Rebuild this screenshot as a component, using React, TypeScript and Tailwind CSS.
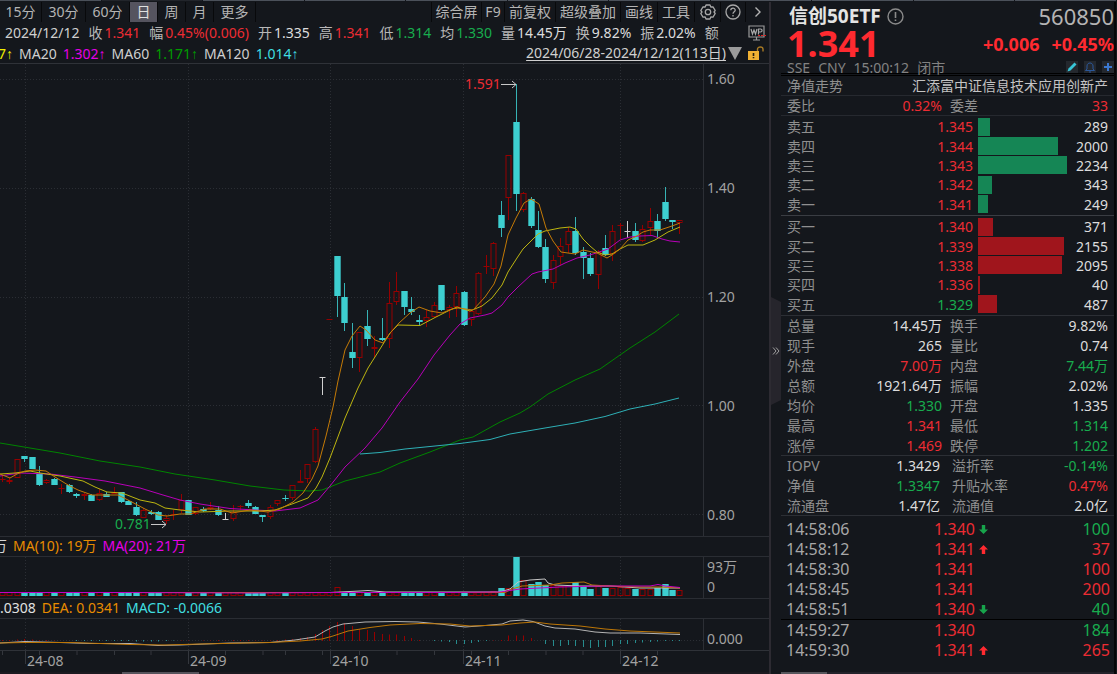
import React from "react";

type Kind = "up" | "down" | "flat";
/** kind, body top, body bottom, high, low (pane coordinates) */
type Candle = [Kind, number, number, number, number];

const PITCH = 7.447;
const FIRST = 2.3;
const cx = (i: number) => FIRST + PITCH * i;

const CYAN = "#3dcfd0";
const RED = "#960000";
const WHITE = "#d0d0d0";

const candles: Candle[] = [
  ["up", 479, 480, 475, 482], ["up", 480, 482, 478, 484], ["up", 459, 478, 459, 478], ["down", 456, 459, 456, 462],
  ["down", 457, 469, 457, 469], ["down", 474, 485, 466, 486], ["up", 480, 483, 479, 484], ["down", 479, 485, 478, 485],
  ["up", 488, 489, 484, 494], ["down", 485, 492, 484, 493], ["down", 494, 496, 493, 498], ["up", 494, 496, 493, 500],
  ["down", 495, 501, 494, 501], ["up", 493, 500, 489, 501], ["down", 494, 497, 492, 497], ["up", 492, 494, 487, 494],
  ["down", 492, 502, 492, 503], ["down", 501, 505, 500, 505], ["down", 507, 515, 502, 516], ["up", 510, 518, 508, 518],
  ["down", 512, 514, 510, 515], ["down", 512, 520, 511, 520], ["up", 518, 521, 515, 524], ["up", 514, 515, 510, 520],
  ["up", 500, 510, 494, 513], ["down", 500, 515, 500, 515], ["up", 507, 514, 507, 515], ["down", 509, 511, 507, 512],
  ["up", 507, 509, 502, 510], ["down", 510, 515, 506, 516], ["flat", 519, 520, 513, 520], ["up", 512, 519, 505, 521],
  ["up", 506, 507, 505, 510], ["down", 503, 506, 500, 508], ["down", 507, 514, 506, 514], ["down", 515, 517, 515, 522],
  ["up", 507, 517, 505, 519], ["up", 500, 504, 500, 506], ["down", 498, 499, 495, 501], ["up", 485, 498, 485, 500],
  ["up", 481, 483, 470, 483], ["up", 464, 479, 464, 483], ["up", 429, 462, 427, 463], ["flat", 377, 378, 377, 395],
  ["up", 319, 320, 319, 320], ["down", 256, 296, 256, 317], ["down", 297, 323, 283, 331], ["down", 352, 358, 323, 368],
  ["up", 332, 358, 332, 372], ["down", 326, 339, 310, 346], ["up", 347, 349, 336, 358], ["down", 338, 340, 318, 341],
  ["up", 303, 339, 282, 348], ["up", 291, 302, 272, 305], ["down", 291, 307, 291, 315], ["down", 309, 312, 297, 315],
  ["down", 320, 322, 315, 326], ["up", 317, 321, 310, 327], ["up", 305, 317, 302, 318], ["down", 285, 310, 285, 311],
  ["up", 307, 310, 305, 318], ["up", 293, 307, 286, 317], ["down", 292, 325, 291, 326], ["up", 311, 320, 310, 326],
  ["up", 273, 314, 272, 315], ["up", 266, 267, 255, 274], ["up", 243, 269, 242, 276], ["down", 215, 228, 201, 237],
  ["up", 155, 198, 155, 220], ["down", 122, 194, 84, 211], ["up", 193, 210, 192, 212], ["down", 199, 226, 197, 228],
  ["down", 230, 247, 211, 248], ["down", 247, 279, 239, 283], ["up", 260, 283, 255, 289], ["up", 246, 257, 238, 265],
  ["up", 231, 245, 227, 253], ["down", 231, 253, 217, 255], ["down", 252, 258, 247, 279], ["down", 258, 274, 253, 276],
  ["up", 252, 275, 250, 289], ["down", 248, 255, 235, 256], ["up", 231, 254, 225, 261], ["up", 225, 226, 223, 239],
  ["flat", 231, 232, 221, 238], ["down", 231, 240, 223, 242], ["up", 229, 241, 225, 242], ["up", 221, 228, 208, 235],
  ["down", 221, 231, 214, 238], ["down", 202, 219, 187, 221], ["down", 220, 222, 220, 229], ["up", 220, 223, 220, 234],
];

const volumes = [
  ...candles.slice(0, 65).map((_, i) => (i === 45 ? 9 : 4)),
  4, 5, 8, 8, 39, 16, 12, 14, 11, 11, 10, 11, 14, 10, 7, 10, 8, 8, 9, 8, 7, 7, 7, 8, 12, 6, 6,
];

const macd = [
  1, 1, 1.5, 2, 1.5, 1, 1, 0.5, 0, 0, -1, -1, -1, -1, -1, -1, -1, -1, -1.5, -1.5, -1.5, -1.5, -1, -0.5, 0.5, 0.5, 0, 0.5,
  0.5, 1, 0.5, 1, 1, 1, 0.5, 0.5, 0.5, 1, 1.5, 2, 3, 4, 7, 11, 15, 19, 18, 15, 12, 11, 9, 7, 6.5, 6.5, 5, 3, 1, 0, -1,
  -1.5, -2, -4, -4, -3, -2, -1, 0.5, 1, 5.5, 5.5, 5.5, 3, 0, -4, -6, -6, -5, -6, -7, -8, -7, -7, -6, -4, -4, -3, -2.5,
  -2, -1.5, -1, -1, -1,
];

const months = [25, 188.5, 330, 463.5, 620.5];
const minorTicks = [2.5, 39.5, 77, 114.5, 151, 225.5, 263, 285.5, 322.5, 359.5, 397, 434.5, 471.5, 508.5, 546, 583, 657.5];

function Pane({ y, height, className, grid, children }: {
  y: number; height: number; className: string; grid: number[]; children: React.ReactNode;
}) {
  return (
    <svg className={`min-w-0 flex-1 ${className}`} viewBox={`0 ${y} 704 ${height}`} preserveAspectRatio="none" fill="none" aria-hidden="true">
      {months.map((x) => (
        <path key={x} d={`M${Math.floor(x) + 0.5} ${y}V${y + height}`} stroke="#2b2e34" strokeDasharray="1 2" />
      ))}
      {grid.map((g) => (
        <path key={g} d={`M0 ${g}H704`} stroke="#2b2e34" strokeDasharray="1 2" />
      ))}
      <path d={`M703.5 ${y}V${y + height}`} stroke="#2c2f35" />
      {children}
    </svg>
  );
}

function CandleShape({ c, i }: { c: Candle; i: number }) {
  const [kind, top, bottom, high, low] = c;
  const x = cx(i);
  const wick = Math.floor(x);
  if (kind === "down") {
    return (
      <g fill={CYAN}>
        <rect x={wick} y={high} width={1} height={low - high} opacity={0.85} />
        <rect x={wick - 2.7} y={top} width={6.4} height={Math.max(1, bottom - top)} />
      </g>
    );
  }
  const color = kind === "up" ? RED : WHITE;
  return (
    <g>
      {top > high && <rect x={wick} y={high} width={1} height={top - high} fill={color} />}
      {low > bottom && <rect x={wick} y={bottom} width={1} height={low - bottom} fill={color} />}
      {bottom - top <= 1 ? (
        <rect x={wick - 2.5} y={top} width={6} height={1} fill={color} />
      ) : (
        <rect x={wick - 2} y={top + 0.5} width={5} height={bottom - top - 1} stroke={color} />
      )}
    </g>
  );
}

function PriceChart() {
  return (
    <Pane y={64} height={472} className="h-[472px]" grid={[79.5, 188.5, 297.5, 405.5, 514.5]}>
      {candles.map((c, i) => <CandleShape key={i} c={c} i={i} />)}
      <g strokeWidth="1" strokeLinejoin="round">
        <path stroke="#008400" d="M0 443L24 447L60 453L100 461L140 467L175 474L215 480L250 486L284 490L310 491L322 490L345 481L380 472L400 463L430 452L460 440L473 437L500 422L520 413L530 407L548 394L575 380L600 369L630 348L655 332L679 314" />
        <path stroke="#2eb0b6" d="M360 454L380 452.5L405 449L435 446L460 443.5L490 439.5L510 434L545 428L575 423L605 416.5L630 409L655 404L679 398" />
        <path stroke="#b800b8" d="M0 476L20 473L50 474L75 477L105 481L140 488L163 495L180 500L200 504L230 508.5L255 510L275 511L300 508L318 500L330 486L345 467L365 448L382 428L400 402L418 379L434 355L450 335L460 324L470 318L485 315L492 313L502 305L508 297L518 287L532 274L538 272L553 269L565 263L577 258L590 255L608 249L620 240L630 237L640 236L652 235.5L662 239L670 241L680 242" />
        <path stroke="#bdb510" d="M0 474L15 473L30 471L40 473L60 476L83 481L95 487L107 492L122 493L140 500L155 503L165 508L180 510L200 512L230 511L260 511L275 510L292 504L308 498L316 488L322 477L330 458L345 418L358 388L368 368L380 349L390 333L398 325L420 325.5L436 317L450 310L457 307L470 311L482 306L492 298L502 285L508 272L517 258L523 249L531 241L538 234L545 231L560 228L570 227L576 229L583 239L590 246L597 252L605 255L612 254L620 249L628 245L643 245L655 240L668 232L680 227" />
        <path stroke="#c47a06" d="M0 474L10 478L17 474L25 471L35 470L46 471L55 477L68 485L78 490L92 495L118 495L130 501L145 509L158 515L167 516L180 514L190 514L205 509L220 509L232 513L250 510L268 512L280 509L293 502L303 493L312 479L318 466L326 436L333 407L338 381L345 350L352 336L360 326L366 330L375 340L383 343L391 332L399 323L410 313L419 307L430 311L442 313L452 309L458 308L473 310L485 297L494 284L501 266L508 235L516 218L524 203L531 199L539 204L546 228L553 241L561 252L575 254L583 250L597 253L607 258L612 255L620 249L628 240L635 237L643 232L650 230L660 230L672 226L680 223" />
      </g>
      <g stroke="#c8c8c8">
        <path d="M501 84.500H516M512 81L516 84.500L512 88" />
        <path d="M151 524.500H166M162 521L166 524.500L162 528" />
      </g>
    </Pane>
  );
}

function VolumeChart() {
  return (
    <Pane y={557} height={41} className="h-[41px]" grid={[]}>
      {volumes.map((v, i) => {
        const x = Math.floor(cx(i));
        return candles[i][0] === "down" && i !== 45 ? (
          <rect key={i} x={x - 2.7} y={596 - v} width={6.4} height={v} fill={CYAN} />
        ) : (
          <rect key={i} x={x - 2} y={596.5 - v} width={5} height={v - 1} stroke={RED} />
        );
      })}
      <path stroke="#c4c4c4" d="M0 592.5H330L360 591L368 590.500L385 592H500L510 589L518 582L530 580L545 579L548 583L555 585L580 586L610 586L640 588L680 588" />
      <path stroke="#bd7606" d="M0 592.500H505L512 589L522 586L550 585L562 583L584 582L592 585L610 586L640 587L660 587L680 588" />
      <path stroke="#c400c4" d="M0 592.500H120L250 593L330 592.500H450L500 592L520 589L560 587L600 586L650 586L658 584.500L665 586L680 587.500" />
    </Pane>
  );
}

function MacdChart() {
  return (
    <Pane y={619} height={31} className="h-[31px]" grid={[640.5]}>
      {macd.map((v, i) => (
        <rect key={i} x={Math.floor(cx(i))} y={v > 0 ? 641 - v : 640} width={1} height={Math.abs(v)} fill={v > 0 ? "#960000" : "#268c8e"} />
      ))}
      <path stroke="#b4b4b4" d="M0 643L25 641.500L60 642.500L90 643.500L130 643.500L158 645.500L180 645L230 643L270 642.500L295 640L315 637L325 631L333 627L343 624L365 622L395 621.500L418 622L440 624L465 627L485 625.500L502 624L510 621L523 620L533 621.500L545 626L555 628L575 629L595 632L610 633L640 633L680 634.500" />
      <path stroke="#bd7606" d="M0 643L25 642.500L70 642.500L130 644.500L165 645L200 644L270 642.500L300 641L322 639L333 636L348 631L370 627.500L390 625L420 623.500L450 624L470 626L502 625L520 623L535 622L550 624L580 626L605 629L630 631L655 632L680 633" />
    </Pane>
  );
}

function PaneRow({ children, axis }: { children: React.ReactNode; axis: React.ReactNode }) {
  return (
    <div className="flex">
      {children}
      {axis}
    </div>
  );
}

function DateAxis() {
  return (
    <div className="flex h-[22px] border-t border-[#2f3238]">
      <div className="relative min-w-0 flex-1">
        <svg className="absolute inset-0 h-full w-full" viewBox="0 0 704 21" preserveAspectRatio="none" aria-hidden="true">
          {minorTicks.map((x) => <path key={x} d={`M${x} 0V4`} stroke="#34373d" />)}
          {months.map((x) => <path key={x} d={`M${Math.floor(x) + 0.5} 0V13`} stroke="#34373d" />)}
        </svg>
        <div className="grid h-full grid-cols-[25fr_163fr_142fr_133fr_157fr_84fr] text-[#a2a2a2] leading-5">
          <span />
          {["24-08", "24-09", "24-10", "24-11", "24-12"].map((m) => <span key={m} className="pl-0.5">{m}</span>)}
        </div>
      </div>
      <div className="w-[65px]" />
    </div>
  );
}

const periods = [
  ["15分", "w-[42px]"], ["30分", "w-[44px]"], ["60分", "w-[44px]"], ["日", "w-7"], ["周", "w-7"], ["月", "w-7"], ["更多", "w-[42px]"],
];
const tools = [
  ["综合屏", "w-[50px]"], ["F9", "w-[23px]"], ["前复权", "w-[51px]"], ["超级叠加", "w-[65px]"], ["画线", "w-[37px]"], ["工具", "w-[37px]"],
];

function Toolbar() {
  return (
    <div className="flex h-5 justify-between leading-5 text-[#b4b4b4]">
      <div className="flex">
        {periods.map(([t, w]) => (
          <button key={t} type="button" className={`${w} border-r border-[#08090b] ${t === "日" ? "bg-[#55545f] text-[#e0e0e0]" : ""}`}>{t}</button>
        ))}
      </div>
      <div className="flex">
        {tools.map(([t, w]) => (
          <button key={t} type="button" className={`${w} border-l border-[#08090b] whitespace-nowrap`}>{t}</button>
        ))}
        <button type="button" aria-label="设置" className="flex w-[26px] items-center justify-center border-l border-[#08090b]">
          <svg width="16" height="16" viewBox="0 0 16 16" fill="none" stroke="#a8a8a8" strokeWidth="1.3" strokeLinejoin="round">
            <path d="M6 1H10L10.800 3L13 2.900L15.200 6.500L14 8L15.200 9.500L13 13.100L10.800 13L10 15H6L5.200 13L3 13.100L.8 9.500L2 8L.8 6.500L3 2.900L5.200 3Z" />
            <circle cx="8" cy="8" r="2.700" />
          </svg>
        </button>
        <button type="button" aria-label="帮助" className="flex w-[25px] items-center justify-center border-l border-[#08090b]">
          <svg width="16" height="16" viewBox="0 0 16 16" fill="none" stroke="#a8a8a8" strokeWidth="1.3">
            <circle cx="8" cy="8" r="7" />
            <path d="M5.800 6.300C5.800 3.400 10.200 3.400 10.200 6.200C10.200 7.700 8 7.900 8 9.700M8 11V12.400" />
          </svg>
        </button>
        <button type="button" aria-label="展开" className="flex w-6 items-center justify-center border-l border-[#08090b]">
          <svg width="8" height="12" viewBox="0 0 8 12" fill="none" stroke="#b4b4b4" strokeWidth="1.4"><path d="M1.500 1.500L6 6L1.500 10.500" /></svg>
        </button>
      </div>
    </div>
  );
}

const W = "text-[#dcdcdc]";
const R = "text-[#ec2c33]";
const G = "text-[#18ac4e]";

const quote: [string, string, string][] = [
  ["收", "1.341", R], ["幅", "0.45%(0.006)", R], ["开", "1.335", W], ["高", "1.341", R], ["低", "1.314", G],
  ["均", "1.330", G], ["量", "14.45万", W], ["换", "9.82%", W], ["振", "2.02%", W], ["额", "", W],
];

function QuoteLine() {
  return (
    <div className="flex h-[21px] items-center justify-between pr-[3px] pl-[5px] leading-[21px]">
      <div className="flex min-w-0 gap-[9px] overflow-hidden whitespace-nowrap text-[#b8b8b8]">
        <span className="text-[#d0d0d0]">2024/12/12</span>
        {quote.map(([k, v, c]) => (
          <span key={k} className="flex gap-0.5"><span>{k}</span>{v && <span className={c}>{v}</span>}</span>
        ))}
      </div>
      <svg width="18" height="16" viewBox="0 0 18 16" fill="none" aria-hidden="true">
        <path d="M1 1H16V12H1ZM8.500 12V14.500M5 15H12" stroke="#9a9a9a" strokeWidth="1.200" />
        <path d="M3 4L4.500 9L6 5L7.500 9L9 4M10.500 9.500V4H12.500C14.600 4 14.600 7 12.500 7H10.500" stroke="#a8a8a8" strokeWidth="1.200" />
        <path d="M10 10.500H18" stroke="#e02020" strokeWidth="1.200" strokeDasharray="2 1" />
      </svg>
    </div>
  );
}

const Up = () => <span className="font-['Liberation_Sans'] font-bold">↑</span>;

function AverageLine() {
  return (
    <div className="flex h-[21px] justify-between border-b border-[#2f3238] pr-[5px] leading-[22px] whitespace-nowrap text-[#cfcfcf]">
      <div className="flex gap-1.5 overflow-hidden">
        <span className="-ml-0.5 text-[#f0f000]">7<Up /></span>
        <span>MA20</span><span className="text-[#e600e6]">1.302<Up /></span>
        <span>MA60</span><span className="text-[#009c00]">1.171<Up /></span>
        <span>MA120</span><span className="text-[#40dfe0]">1.014<Up /></span>
      </div>
      <div className="flex items-center">
        <a href="#range" className="text-[#d0d0d0] underline underline-offset-2">2024/06/28-2024/12/12(113日)</a>
        <svg className="ml-0.5" width="14" height="13" viewBox="0 0 14 13" aria-hidden="true"><path d="M0 0H14L7 13Z" fill="#9b9b9b" /></svg>
        <svg className="ml-1.5" width="16" height="14" viewBox="0 0 16 14" aria-hidden="true">
          <rect x="0" y="5" width="11" height="9" fill="#f0b133" />
          <path d="M9.500 5V3C9.500 .3 15 .3 15 3V5.500" fill="none" stroke="#a87a24" strokeWidth="1.400" />
          <path d="M5.500 7V10M5.500 11V12.300" stroke="#2a2110" strokeWidth="1.600" />
        </svg>
      </div>
    </div>
  );
}

function ChartArea() {
  return (
    <main className="min-w-0 flex-1 border-r-2 border-[#2d2b32]">
      <Toolbar />
      <QuoteLine />
      <AverageLine />
      <div className="relative">
        <PaneRow
          axis={
            <div className="flex w-[65px] flex-col justify-between pt-[5px] pb-[11px] pl-[3px] leading-5 text-[#a2a2a2]">
              {["1.60", "1.40", "1.20", "1.00", "0.80"].map((p) => <span key={p}>{p}</span>)}
            </div>
          }
        >
          <PriceChart />
        </PaneRow>
        <span className={`absolute top-[10px] left-[465px] leading-5 ${R}`}>1.591</span>
        <span className={`absolute top-[450px] left-[115px] leading-5 ${G}`}>0.781</span>
      </div>
      <div className="flex h-[21px] gap-1.5 overflow-hidden border-y border-[#2a2d33] leading-[18px] whitespace-nowrap">
        <span className="-ml-[7px] text-[#d6d6d6]">万</span>
        <span className="text-[#e88c00]">MA(10): 19万</span>
        <span className="text-[#e600e6]">MA(20): 21万</span>
      </div>
      <PaneRow
        axis={
          <div className="flex w-[65px] flex-col pl-[3px] leading-5 text-[#a2a2a2]">
            <span>93万</span><span>0</span>
          </div>
        }
      >
        <VolumeChart />
      </PaneRow>
      <div className="flex h-[21px] gap-1.5 overflow-hidden border-y border-[#2a2d33] leading-[18px] whitespace-nowrap">
        <span className="-ml-2 text-[#e0e0e0]">0.0308</span>
        <span className="text-[#e88c00]">DEA: 0.0341</span>
        <span className="text-[#40dfe0]">MACD: -0.0066</span>
      </div>
      <PaneRow axis={<div className="w-[65px] pt-2.5 pl-[3px] leading-5 text-[#a2a2a2]">0.000</div>}>
        <MacdChart />
      </PaneRow>
      <DateAxis />
      <div className="h-0.5 bg-[#1c1a20] pl-[122px]"><div className="h-0.5 w-[77px] bg-[#56545c]" /></div>
    </main>
  );
}

type Level = [string, string, number, string];
const asks: Level[] = [
  ["卖五", "1.345", 289, R], ["卖四", "1.344", 2000, R], ["卖三", "1.343", 2234, R], ["卖二", "1.342", 343, R], ["卖一", "1.341", 249, R],
];
const bids: Level[] = [
  ["买一", "1.340", 371, R], ["买二", "1.339", 2155, R], ["买三", "1.338", 2095, R], ["买四", "1.336", 40, R], ["买五", "1.329", 487, G],
];

function Book({ levels, bar }: { levels: Level[]; bar: string }) {
  return (
    <table className="h-[97px] w-full table-fixed leading-[19px]">
      <colgroup><col className="w-[60px]" /><col /><col className="w-[96px]" /><col className="w-[45px]" /></colgroup>
      <tbody>
        {levels.map(([name, price, size, color]) => (
          <tr key={name}>
            <th scope="row" className="p-0 pl-1.5 text-left font-normal text-[#8f8f8f]">{name}</th>
            <td className={`p-0 text-right ${color}`}>{price}</td>
            <td className="p-0 pl-[5px]"><div className={`h-[18px] ${bar}`} style={{ width: `${(size / 2234) * 98}%` }} /></td>
            <td className="p-0 pr-1.5 text-right text-[#dcdcdc]">{size}</td>
          </tr>
        ))}
      </tbody>
    </table>
  );
}

type Stat = [string, string, string, string, string, string];
const stats: Stat[] = [
  ["总量", "14.45万", W, "换手", "9.82%", W], ["现手", "265", W, "量比", "0.74", W], ["外盘", "7.00万", R, "内盘", "7.44万", G],
  ["总额", "1921.64万", W, "振幅", "2.02%", W], ["均价", "1.330", G, "开盘", "1.335", W], ["最高", "1.341", R, "最低", "1.314", G],
  ["涨停", "1.469", R, "跌停", "1.202", G],
];
const fund: Stat[] = [
  ["IOPV", "1.3429", W, "溢折率", "-0.14%", G], ["净值", "1.3347", G, "升贴水率", "0.47%", R], ["流通盘", "1.47亿", W, "流通值", "2.0亿", W],
];

function Stats({ rows, inset }: { rows: Stat[]; inset: boolean }) {
  return (
    <table className="w-full table-fixed leading-5">
      <colgroup><col className="w-[60px]" /><col className="w-[101px]" /><col className="w-[80px]" /><col /></colgroup>
      <tbody>
        {rows.map(([a, av, ac, b, bv, bc]) => (
          <tr key={a}>
            <th scope="row" className="p-0 pl-1.5 text-left font-normal text-[#8f8f8f]">{a}</th>
            <td className={`p-0 text-right ${inset ? "pr-0.5" : ""} ${ac}`}>{av}</td>
            <th scope="row" className={`p-0 text-left font-normal text-[#8f8f8f] ${inset ? "pl-2.5" : "pl-2"}`}>{b}</th>
            <td className={`p-0 pr-1.5 text-right ${bc}`}>{bv}</td>
          </tr>
        ))}
      </tbody>
    </table>
  );
}

type Tick = [string, string, "" | "up" | "down", string, string];
const ticks: Tick[] = [
  ["14:58:06", "1.340", "down", "100", G], ["14:58:12", "1.341", "up", "37", R], ["14:58:30", "1.341", "", "100", R],
  ["14:58:45", "1.341", "", "200", R], ["14:58:51", "1.340", "down", "40", G],
];
const lateTicks: Tick[] = [["14:59:27", "1.340", "", "184", G], ["14:59:30", "1.341", "up", "265", R]];

function Ticks({ rows }: { rows: Tick[] }) {
  return (
    <table className="w-full table-fixed text-base leading-5">
      <colgroup><col className="w-[100px]" /><col className="w-[94px]" /><col className="w-[40px]" /><col /></colgroup>
      <tbody>
        {rows.map(([time, price, dir, qty, color]) => (
          <tr key={time}>
            <td className="p-0 pl-[5px] text-[#a8a8a8]">{time}</td>
            <td className={`p-0 text-right ${R}`}>{price}</td>
            <td className="p-0 pl-1">
              {dir !== "" && (
                <svg className="block" width="9" height="9" viewBox="0 0 9 9" role="img" aria-label={dir === "up" ? "上涨" : "下跌"}>
                  {dir === "up" ? <path d="M4.500 0L9 4.500H6.200V9H2.800V4.500H0Z" fill="#ff2a30" /> : <path d="M4.500 9L0 4.500H2.800V0H6.200V4.500H9Z" fill="#17a44b" />}
                </svg>
              )}
            </td>
            <td className={`p-0 pr-1 text-right ${color}`}>{qty}</td>
          </tr>
        ))}
      </tbody>
    </table>
  );
}

function Header() {
  return (
    <header className="h-[72px] border-b border-black pl-1.5">
      <div className="flex h-7 items-center justify-between">
        <h1 className="flex items-center gap-1.5 pl-0.5 text-[19px] leading-7 font-bold text-[#e4e4e4]">
          信创50ETF
          <svg width="17" height="17" viewBox="0 0 17 17" fill="none" stroke="#8a8a8a" aria-hidden="true">
            <circle cx="8.500" cy="8.500" r="7.500" strokeWidth="1.400" />
            <path d="M8.500 4V10M8.500 11.500V13" strokeWidth="1.600" />
          </svg>
        </h1>
        <span className="text-[22px] leading-7 text-[#b4b4b4]">560850</span>
      </div>
      <div className="flex h-[28px] items-center justify-between font-bold text-[#ff2a30]">
        <span className="text-4xl leading-7">1.341</span>
        <span className="flex gap-3 text-lg leading-[26px]"><span>+0.006</span><span>+0.45%</span></span>
      </div>
      <div className="flex h-[15px] items-start justify-between text-[#828282]">
        <div className="flex gap-2 leading-5"><span>SSE</span><span>CNY</span><span>15:00:12</span><span>闭市</span></div>
        <div className="flex gap-1.5 pt-[3px]">
          <button type="button" aria-label="编辑" className="h-3 w-3 bg-[#24282e]">
            <svg className="block" width="12" height="12" viewBox="0 0 12 12"><path d="M1.500 10.500L2.500 7.500L8.500 1.500L10.500 3.500L4.500 9.500Z" fill="#38c6d8" /></svg>
          </button>
          <button type="button" aria-label="提醒" className="h-3 w-3 bg-[#24282e]">
            <svg className="block" width="12" height="12" viewBox="0 0 12 12" fill="none" stroke="#2a579a"><path d="M1.500 9.500H10.500L9 8V5C9 1 3 1 3 5V8ZM5 11H7" /></svg>
          </button>
          <button type="button" aria-label="添加" className="h-3 w-3 bg-[#24282e]">
            <svg className="block" width="12" height="12" viewBox="0 0 12 12"><path d="M6 2V10M2 6H10" stroke="#3b78d0" strokeWidth="2" /></svg>
          </button>
        </div>
      </div>
    </header>
  );
}

function QuotePanel() {
  return (
    <aside className="flex w-[333px] shrink-0 flex-col">
      <Header />
      <div className="mt-px flex h-[21px] justify-between border-t border-b border-t-black border-b-[#26292f] pr-1.5 pl-1.5 leading-5 whitespace-nowrap">
        <span className="text-[#8f8f8f]">净值走势</span>
        <span className="text-[#c4c4c4]">汇添富中证信息技术应用创新产</span>
      </div>
      <div className="h-5 border-b border-[#26292f]">
        <Stats rows={[["委比", "0.32%", R, "委差", "33", R]]} inset={false} />
      </div>
      <div className="h-[100px] border-b border-[#3a3d43] pt-px"><Book levels={asks} bar="bg-[#158655]" /></div>
      <div className="h-[100px] border-b border-[#2c2f35] pt-px"><Book levels={bids} bar="bg-[#a0151c]" /></div>
      <div className="h-[140px] border-b border-[#2c2f35]"><Stats rows={stats} inset={false} /></div>
      <div className="h-[60px] border-b border-[#2c2f35]"><Stats rows={fund} inset /></div>
      <div className="mt-[3px] border-b border-black"><Ticks rows={ticks} /></div>
      <Ticks rows={lateTicks} />
      <div className="mt-auto h-0.5 bg-[#23222a]"><div className="h-0.5 w-[46px] bg-[#56565c]" /></div>
    </aside>
  );
}

export default function App() {
  return (
    <div className="flex min-h-screen flex-col bg-[#14171c] font-['Noto_Sans','Noto_Sans_CJK_SC',sans-serif] text-sm">
      <div className="flex h-0.5 overflow-hidden">
        {Array.from({ length: 11 }, (_, i) => (
          <div key={i} className={`h-px flex-1 border-r border-[#14171c] ${i === 1 ? "bg-[#22252b]" : "bg-[#4b515a]"}`} />
        ))}
      </div>
      <div className="flex flex-1">
        <ChartArea />
        <div className="w-2.5 shrink-0 pt-[295px]">
          <button type="button" aria-label="收起面板" className="flex h-[108px] w-2.5 items-center justify-center bg-[#26252c] [clip-path:polygon(0_0,100%_5px,100%_103px,0_100%)]">
            <svg width="8" height="8" viewBox="0 0 8 8" fill="none" stroke="#a0a0a0"><path d="M1 .5L4 4L1 7.500M4 .5L7 4L4 7.500" /></svg>
          </button>
        </div>
        <QuotePanel />
        <div className="w-[3px] shrink-0 border-l-2 border-[#060708]" />
      </div>
    </div>
  );
}
